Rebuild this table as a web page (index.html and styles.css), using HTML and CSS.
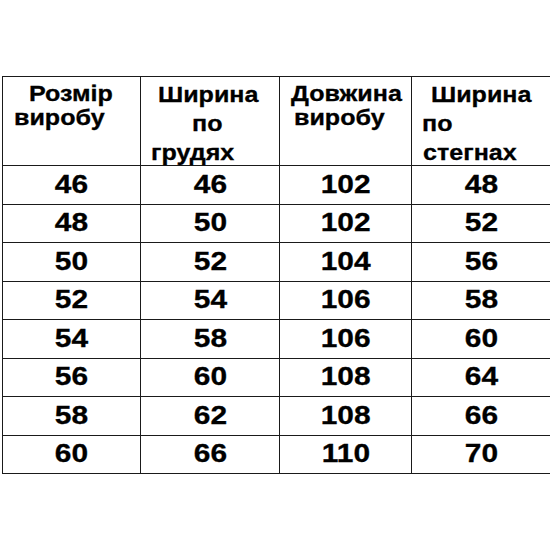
FILE: index.html
```html
<!DOCTYPE html>
<html lang="uk">
<head>
<meta charset="utf-8">
<title>Розмірна сітка</title>
<link rel="stylesheet" href="styles.css">
</head>
<body>
<table class="sizes">
  <colgroup>
    <col class="c1"><col class="c2"><col class="c3"><col class="c4">
  </colgroup>
  <thead>
    <tr>
      <th class="hd short">
        <div class="ln i26"><span class="t">Розмір</span></div>
        <div class="ln i11"><span class="t">виробу</span></div>
      </th>
      <th class="hd tall">
        <div class="ln i17"><span class="t">Ширина</span></div>
        <div class="ln i51"><span class="t">по</span></div>
        <div class="ln i10"><span class="t">грудях</span></div>
      </th>
      <th class="hd short">
        <div class="ln i11"><span class="t">Довжина</span></div>
        <div class="ln i14"><span class="t">виробу</span></div>
      </th>
      <th class="hd tall">
        <div class="ln i19"><span class="t">Ширина</span></div>
        <div class="ln i10"><span class="t">по</span></div>
        <div class="ln i11"><span class="t">стегнах</span></div>
      </th>
    </tr>
  </thead>
  <tbody>
    <tr class="r39"><td><span class="n">46</span></td><td><span class="n">46</span></td><td><span class="n">102</span></td><td><span class="n">48</span></td></tr>
    <tr class="r38"><td><span class="n">48</span></td><td><span class="n">50</span></td><td><span class="n">102</span></td><td><span class="n">52</span></td></tr>
    <tr class="r39"><td><span class="n">50</span></td><td><span class="n">52</span></td><td><span class="n">104</span></td><td><span class="n">56</span></td></tr>
    <tr class="r38"><td><span class="n">52</span></td><td><span class="n">54</span></td><td><span class="n">106</span></td><td><span class="n">58</span></td></tr>
    <tr class="r39"><td><span class="n">54</span></td><td><span class="n">58</span></td><td><span class="n">106</span></td><td><span class="n">60</span></td></tr>
    <tr class="r38"><td><span class="n">56</span></td><td><span class="n">60</span></td><td><span class="n">108</span></td><td><span class="n">64</span></td></tr>
    <tr class="r39"><td><span class="n">58</span></td><td><span class="n">62</span></td><td><span class="n">108</span></td><td><span class="n">66</span></td></tr>
    <tr class="r38"><td><span class="n">60</span></td><td><span class="n">66</span></td><td><span class="n">110</span></td><td><span class="n">70</span></td></tr>
  </tbody>
</table>
</body>
</html>
```
FILE: styles.css
```css
html, body {
  margin: 0;
  padding: 0;
  background: #ffffff;
  overflow: hidden;
}
body {
  width: 550px;
  height: 550px;
  font-family: "Liberation Sans", Arial, sans-serif;
  font-weight: 700;
  color: #000;
}
.sizes {
  border-collapse: collapse;
  table-layout: fixed;
  width: 549px;
  margin: 76px 0 0 2px;
}
.c1 { width: 138px; }
.c2 { width: 139px; }
.c3 { width: 132px; }
.c4 { width: 140px; }
.sizes th, .sizes td {
  border: 1px solid #1a1a1a;
  padding: 0;
}
.hd {
  vertical-align: top;
  text-align: left;
  font-size: 22px;
  font-weight: 700;
}
.ln {
  white-space: nowrap;
}
.tall .ln:last-child {
  margin-bottom: -5px;
}
.t, .n {
  display: inline-block;
  -webkit-text-stroke: 0.3px #000;
}
.t {
  transform: scaleX(1.14);
  transform-origin: left center;
}
.i10 { padding-left: 10px; }
.i11 { padding-left: 11px; }
.i14 { padding-left: 14px; }
.i17 { padding-left: 17px; }
.i19 { padding-left: 19px; }
.i26 { padding-left: 26px; }
.i51 { padding-left: 51px; }
.sizes th.short { padding-top: 5px; line-height: 24px; height: 83px; }
.sizes th.tall { padding-top: 3px; line-height: 29px; height: 85px; }
.sizes td {
  text-align: center;
  vertical-align: middle;
  font-size: 26px;
  line-height: 30px;
  padding-bottom: 3px;
}
.n {
  transform: scaleX(1.15);
  transform-origin: center center;
}
.r39 td { height: 35px; }
.r38 td { height: 34px; }
```
